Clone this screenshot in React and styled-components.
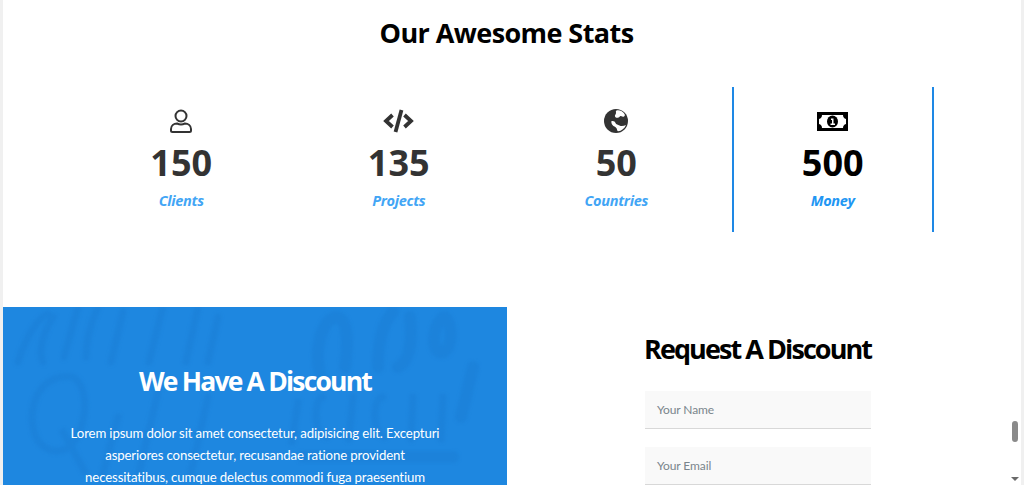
import React from "react";
import styled, { createGlobalStyle } from "styled-components";

const Global = createGlobalStyle`
  html, body { margin: 0; padding: 0; height: 485px; overflow: hidden; background: #fff; }
  #root { height: 485px; }
  * { box-sizing: border-box; }
`;
const font = `"Open Sans", "Noto Sans", sans-serif`;
const bodyFont = `"Lato", "Open Sans", sans-serif`;

const Frame = styled.div`
  display: flex; width: 1024px; height: 485px; overflow: hidden; background: #fff; font-family: ${font};
`;
const Edge = styled.div`width: 3px; background: #f0f0f0; flex: none;`;
const Main = styled.main`flex: 1; min-width: 0; height: 485px; overflow: hidden;`;
const Scrollbar = styled.div`
  flex: none; width: 18px; height: 485px; display: flex; flex-direction: column; align-items: center;
  padding: 421px 0 0 3px; background: #fff; border-right: 3px solid #f0f0f0;
`;
const Thumb = styled.div`width: 6px; height: 21px; border-radius: 3px; background: #8a8a8a;`;
const Arrow = styled.div`
  margin-top: 35px; width: 0; height: 0; border-left: 4px solid transparent; border-right: 4px solid transparent; border-top: 4px solid #6a6a6a;
`;

const Title = styled.h2`
  margin: 0; padding: 14px 0 0 4px; height: 87px; text-align: center; font-size: 27px; line-height: 38px; font-weight: 700;
  color: #000; letter-spacing: -0.58px;
`;
const Stats = styled.section`
  display: grid; grid-template-columns: repeat(4, 217.5px); margin-left: 68.5px; height: 220px; align-items: start;
`;
const Stat = styled.div`
  height: 145px; margin: 0 7.5px; padding: 21px 0 0 ${p => (p.$active ? "0" : "2px")}; text-align: center; display: flex; flex-direction: column; align-items: center;
  color: ${p => (p.$active ? "#000" : "#333")};
  border-left: 2px solid ${p => (p.$active ? "#1e88e5" : "transparent")};
  border-right: 2px solid ${p => (p.$active ? "#1e88e5" : "transparent")};
`;
const IconBox = styled.div`
  height: 26px; display: flex; align-items: center; justify-content: center;
`;
const Number = styled.div`
  margin-top: 7px; font-size: 36px; line-height: 44px; font-weight: 700;
`;
const Label = styled.div`
  margin-top: 4px; font-size: 14.5px; line-height: 24px; font-weight: 700; font-style: italic;
  color: ${p => (p.$active ? "#2196f3" : "#42a5f5")}; letter-spacing: -0.3px;
`;

const Lower = styled.section`display: grid; grid-template-columns: 504px 1fr;`;
const Promo = styled.div`
  position: relative; overflow: hidden; height: 178px; background: #1e87e0; color: #fff; text-align: center; padding: 56px 65px 0;
`;
const Texture = styled.svg`
  position: absolute; inset: 0; width: 100%; height: 100%; filter: blur(1.5px);
`;
const PromoTitle = styled.h3`
  position: relative; margin: 0; font-size: 26.5px; line-height: 36px; font-weight: 700; letter-spacing: -1.8px;
`;
const PromoText = styled.p`
  position: relative; margin: 23px 0 0; font-family: ${bodyFont}; font-size: 13.2px; line-height: 22px; font-weight: 400; letter-spacing: -0.12px;
`;
const FormCol = styled.div`
  padding: 24px 0 0 138px;
`;
const FormTitle = styled.h3`
  margin: 0 0 0 -1px; width: 228px; font-size: 27px; line-height: 36px; font-weight: 700; color: #000; letter-spacing: -1.93px; white-space: nowrap;
`;
const Field = styled.div`
  width: 226px; height: 38px; margin-top: ${p => (p.$first ? "24px" : "18px")}; background: #f9f9f9; border-bottom: 1px solid #d8d8d8;
  padding: 0 12px 1px; display: flex; align-items: center; font-family: ${bodyFont}; font-size: 12px; letter-spacing: -0.1px; color: #7a858c;
`;

const UserIcon = () => (
  <svg width="22" height="25" viewBox="0 0 22 25" fill="none" stroke="#333" strokeWidth="2">
    <circle cx="11" cy="7" r="5.5" />
    <path d="M7 14.5c1.300.6 2.600 1 4 1s2.700-.4 4-1c3 0 6 2 6 5.500v1.500c0 1-.6 1.500-1.500 1.500h-17c-.9 0-1.500-.5-1.500-1.500v-1.500c0-3.500 3-5.500 6-5.500z" />
  </svg>
);
const CodeIcon = () => (
  <svg width="31" height="24" viewBox="0 0 31 24" fill="none" stroke="#333" strokeWidth="3.800">
    <path d="M9.500 6l-6.500 6 6.500 6M21.500 6l6.500 6-6.500 6" />
    <path d="M18.500 1L12.500 23" />
  </svg>
);
const GlobeIcon = () => (
  <svg width="24" height="24" viewBox="0 0 24 24">
    <circle cx="12" cy="12" r="12" fill="#333" />
    <path fill="#fff" d="M12.500 1.500c3-.8 6.500 1 8 3.500.5 1 .5 2-.5 2.500s-2 0-3-.5c-1-.5-1.500 1-2.500 1.500-1.500.6-3 .3-3.500-1-.5-1.500 1-2.200 1-3.500s-.5-1.800.5-2.500z" />
    <path fill="#fff" d="M7 12.500c2-1 4 0 4.500 1.500.5 1.800 2.500 1.700 4 2.500 2 1 4.500.3 6.500-.5-1.500 3.500-4.500 6-8 6.300-1-.3-.8-2-1.500-3-1-1.600-3-1.800-4-3.300-.7-1-1.500-2.500-1-3.500z" />
    <path fill="#333" d="M15.500 14.500c.8-1.500 2.500-2.500 4.300-2 1.200.5 1 2-.3 2.700-1.300.6-3 .5-4-.7z" />
  </svg>
);
const MoneyIcon = () => (
  <svg width="31" height="19" viewBox="0 0 31 19">
    <rect width="31" height="19" fill="#000" />
    <path fill="#fff" d="M5 3h21c0 2 1 3.500 3 4v5c-2 .5-3 2-3 4H5c0-2-1-3.500-3-4V7c2-.5 3-2 3-4z" />
    <ellipse cx="15.500" cy="9.500" rx="5.500" ry="6" fill="#000" />
    <path fill="#fff" d="M14 6.500h2.500v5H18v1.500h-4.500v-1.500H15V8h-1z" />
  </svg>
);

const stats = [
  { icon: <UserIcon />, n: 150, l: "Clients" },
  { icon: <CodeIcon />, n: 135, l: "Projects" },
  { icon: <GlobeIcon />, n: 50, l: "Countries" },
  { icon: <MoneyIcon />, n: 500, l: "Money", active: true },
];

export default function App() {
  return (
    <Frame>
      <Global />
      <Edge />
      <Main>
        <Title>Our Awesome Stats</Title>
        <Stats>
          {stats.map(s => (
            <Stat key={s.l} $active={s.active}>
              <IconBox>{s.icon}</IconBox>
              <Number>{s.n}</Number>
              <Label $active={s.active}>{s.l}</Label>
            </Stat>
          ))}
        </Stats>
        <Lower>
          <Promo>
            <Texture viewBox="0 0 504 178" fill="none" stroke="#1c82da" strokeWidth="7" strokeLinecap="round" aria-hidden="true">
              <path d="M15 55c8-25 20-45 30-48M50 10c-10 15-15 35-10 45M75 0l-14 50M95 0c-8 18-12 35-12 50M120 5l-12 50M160 0l-14 55M195 0l-12 55M215 10l-10 45" />
              <path d="M70 70c-30-5-45 25-40 50 3 20 20 30 36 20 18-15 22-60 4-70zM60 125l22 40" />
              <path d="M115 110l-16 60M155 85l-20 85M205 90l-18 80" />
              <path d="M318 70c-8-25 0-55 14-60 12 0 14 20 10 50M375 60c0-25 5-45 15-55M395 60c10-5 15-20 12-50M440 10c-10 10-12 30-4 35 12 4 16-25 6-35M470 60l-12 50" strokeWidth="12" />
              <path d="M295 95l-6 40M320 90c-10 0-10 40 4 40M350 90l-4 42M380 90c-12 0-10 40 2 40M410 90l-2 42M440 90l-2 42" />
              <path d="M300 150h150" strokeWidth="12" />
            </Texture>
            <PromoTitle>We Have A Discount</PromoTitle>
            <PromoText>Lorem ipsum dolor sit amet consectetur, adipisicing elit. Excepturi asperiores consectetur, recusandae ratione provident necessitatibus, cumque delectus commodi fuga praesentium</PromoText>
          </Promo>
          <FormCol>
            <FormTitle>Request A Discount</FormTitle>
            <Field $first>Your Name</Field>
            <Field>Your Email</Field>
          </FormCol>
        </Lower>
      </Main>
      <Scrollbar>
        <Thumb />
        <Arrow />
      </Scrollbar>
    </Frame>
  );
}
